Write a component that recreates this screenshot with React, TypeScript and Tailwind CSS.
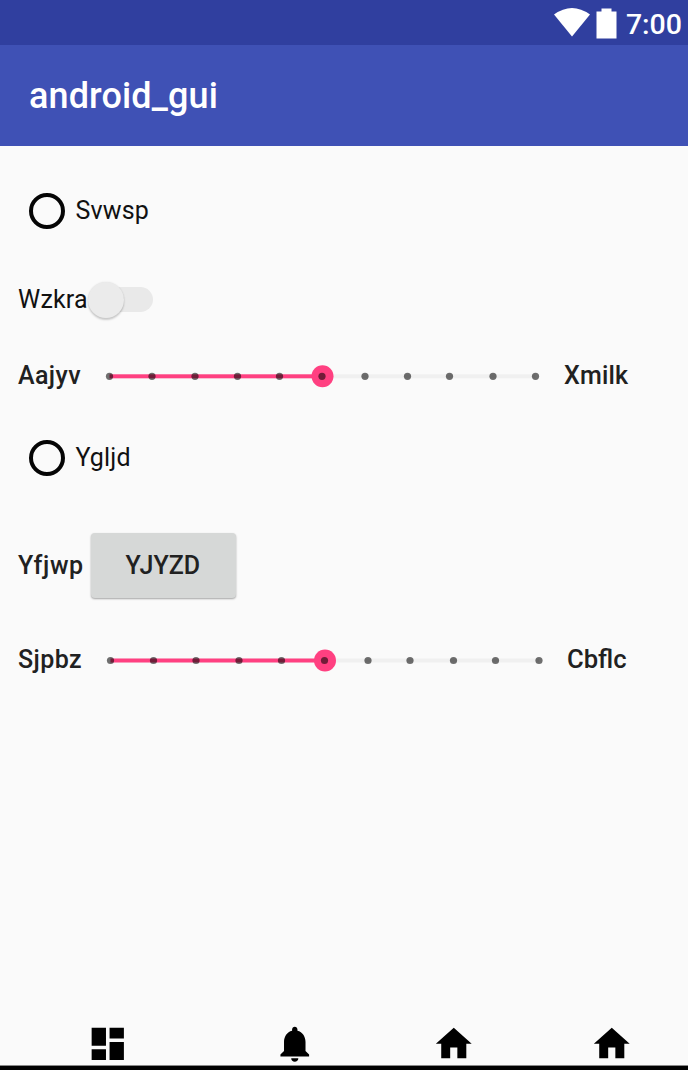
import type { ReactNode } from 'react';

const DASHBOARD = 'M3 13h8V3H3v10zm0 8h8v-6H3v6zm10 0h8V11h-8v10zm0-18v6h8V3h-8z';
const BELL =
  'M12 22c1.1 0 2-.9 2-2h-4c0 1.1.9 2 2 2zm6-6v-5c0-3.07-1.64-5.64-4.5-6.32V4c0-.83-.67-1.5-1.5-1.5s-1.5.67-1.5 1.5v.68C7.63 5.36 6 7.92 6 11v5l-2 2v1h16v-1l-2-2z';
const HOME = 'M10 20v-6h4v6h5v-8h3L12 3 2 12h3v8z';

function NavIcon({ d, className }: { d: string; className: string }) {
  return (
    <svg viewBox="-0.15 -0.2 24 24" className={`h-[43px] w-[43px] shrink-0 fill-black ${className}`}>
      <path d={d} />
    </svg>
  );
}

function Label({ children, className = '' }: { children: ReactNode; className?: string }) {
  return <span className={`block shrink-0 whitespace-nowrap leading-[30px] ${className}`}>{children}</span>;
}

function Radio({ label, className }: { label: string; className: string }) {
  return (
    <label className={`flex items-center pl-[29px] ${className}`}>
      <span className="mr-[10.5px] h-9 w-9 shrink-0 rounded-full border-4 border-[#050505]" />
      <Label className="text-[25px] tracking-[0.15px] text-[#111]">{label}</Label>
    </label>
  );
}

function Slider({ dots, y, className }: { dots: number[]; y: number; className: string }) {
  return (
    <svg className={`h-6 shrink-0 ${className}`}>
      <rect x={dots[0]} y={y - 2} width={dots[10] - dots[0]} height="4" fill="#f0f0f0" />
      <rect x={dots[0]} y={y - 2} width={dots[5] - dots[0]} height="4" fill="#ff4081" />
      <circle cx={dots[5] + 0.5} cy={y} r="11" fill="#ff4081" />
      {dots.map((x) => (
        <circle key={x} cx={x} cy={y} r="3.6" fill="#000" fillOpacity="0.56" />
      ))}
    </svg>
  );
}

export default function App() {
  return (
    <div className="flex h-[1070px] w-[688px] flex-col overflow-hidden bg-[#fafafa] font-['Roboto',sans-serif]">
      <div className="flex h-[45px] shrink-0 items-center justify-end bg-[#303f9f] pr-[6px] text-white">
        <svg viewBox="0 0 64 32" className="mr-[8px] h-8 w-16">
          <path d="M0 7.5Q18 -5.5 36 7.5L18 29.5Z" fill="#fff" />
          <path d="M47.5 1.5h10v3h5v27H42.5v-27h5z" fill="#fff" />
        </svg>
        <span className="mt-[5px] text-[28.5px] leading-[34px] font-medium">7:00</span>
      </div>
      <header className="flex h-[101px] shrink-0 items-center bg-[#3f51b5] pl-[29px]">
        <h1 className="text-[36px] leading-[42px] font-medium tracking-[0.12px] text-white">android_gui</h1>
      </header>
      <main className="flex flex-1 flex-col">
        <Radio label="Svwsp" className="h-[130px]" />
        <div className="flex h-[48px] items-center pl-[18px]">
          <Label className="w-[70px] text-[25px] tracking-[0.2px] text-[#111]">Wzkra</Label>
          <span className="mb-px flex h-[25px] w-[65px] items-center rounded-r-full bg-[linear-gradient(90deg,transparent_18px,#e9e9e9_18px)]">
            <span className="h-9 w-9 rounded-full bg-[#ebebeb] shadow-[0_2px_2px_rgba(0,0,0,0.18),0_0_2px_rgba(0,0,0,0.1)]" />
          </span>
        </div>
        <div className="flex h-[104px] items-center pl-[18px]">
          <Label className="w-[82px] text-[25px] font-medium tracking-[0.4px] text-[#212121]">Aajyv</Label>
          <Slider dots={[9.5, 52, 95, 137.5, 179.5, 222, 265, 307.5, 349.5, 393, 435.5]} y={12.3} className="w-[464px]" />
          <Label className="text-[25px] font-medium tracking-[0.2px] text-[#212121]">Xmilk</Label>
        </div>
        <Radio label="Ygljd" className="h-[59px]" />
        <div className="flex h-[158px] items-center pl-[18px]">
          <Label className="w-[72.5px] text-[25px] font-medium tracking-[0.6px] text-[#212121]">Yfjwp</Label>
          <button className="mb-px flex h-[65px] w-[145.5px] items-center justify-center rounded-[4px] bg-[#d6d8d7] pr-px shadow-[0_1px_2px_rgba(0,0,0,0.35)]">
            <Label className="text-[25px] font-medium text-[#212121]">YJYZD</Label>
          </button>
        </div>
        <div className="flex h-[30px] items-center pl-[18px]">
          <Label className="w-[82px] text-[25px] font-medium tracking-[0.4px] text-[#212121]">Sjpbz</Label>
          <Slider dots={[10.5, 53.5, 96, 139, 181.5, 224.5, 268, 310, 353.5, 395.5, 439]} y={12.5} className="w-[467px]" />
          <Label className="mb-[2px] text-[25.6px] font-medium text-[#212121]">Cbflc</Label>
        </div>
      </main>
      <nav className="flex h-[43px] shrink-0 pl-[86px]">
        <NavIcon d={DASHBOARD} className="mr-[144px]" />
        <NavIcon d={BELL} className="mr-[116px]" />
        <NavIcon d={HOME} className="mr-[115px]" />
        <NavIcon d={HOME} className="" />
      </nav>
      <div className="h-[5px] shrink-0 border-t border-[#888] bg-black" />
    </div>
  );
}
